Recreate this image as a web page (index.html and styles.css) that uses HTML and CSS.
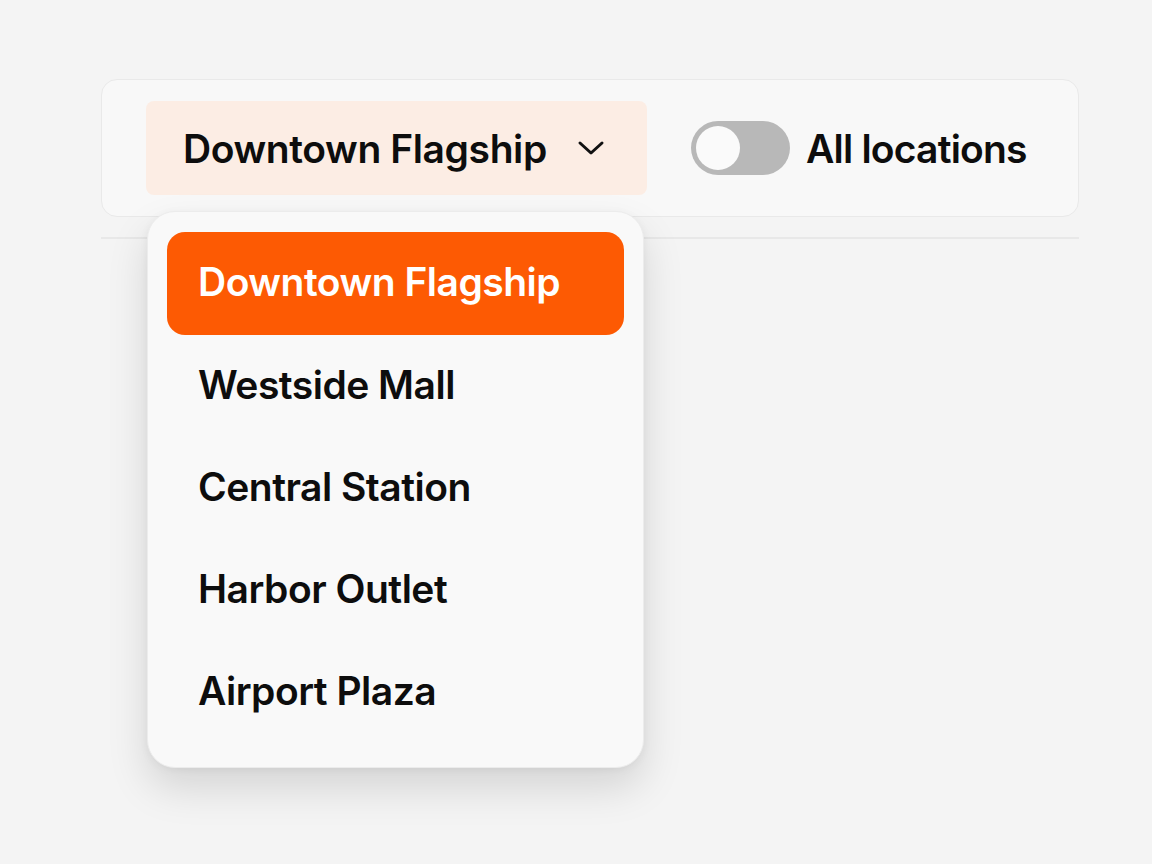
FILE: index.html
```html
<!DOCTYPE html>
<html lang="en">
<head>
    <meta charset="UTF-8">
    <meta name="viewport" content="width=device-width, initial-scale=1.0">
    <title>Location Picker</title>
    <link rel="stylesheet" href="styles.css">
</head>
<body>
    <div class="page">
        <div class="toolbar">
            <div class="picker">
                <button class="select">
                    <span>Downtown Flagship</span>
                    <svg class="chevron" width="28" height="16" viewBox="0 0 28 16">
                        <path d="M3 3 L14 13 L25 3" fill="none" stroke="#111" stroke-width="3" stroke-linecap="round" stroke-linejoin="round"/>
                    </svg>
                </button>
                <!-- Open menu -->
                <ul class="menu">
                    <li class="option active">Downtown Flagship</li>
                    <li class="option">Westside Mall</li>
                    <li class="option">Central Station</li>
                    <li class="option">Harbor Outlet</li>
                    <li class="option">Airport Plaza</li>
                </ul>
            </div>
            <label class="switch-row">
                <span class="switch"><span class="knob"></span></span>
                <span>All locations</span>
            </label>
        </div>
        <div class="divider"></div>
    </div>
</body>
</html>
```

FILE: styles.css
```css
* { margin: 0; padding: 0; box-sizing: border-box; }
body {
    font-family: Inter, "Noto Sans", sans-serif;
    background: #f4f4f4;
    color: #0d0d0d;
    min-height: 100vh;
}
.page {
    width: 978px;
    padding-top: 79px;
    margin-left: 101px;
}
.toolbar {
    display: flex;
    align-items: center;
    gap: 44px;
    padding: 21px 44px;
    background: #f8f8f8;
    border: 1px solid #e9e9e9;
    border-radius: 16px;
}
.picker { position: relative; }
.select {
    display: flex;
    align-items: center;
    gap: 30px;
    width: 501px;
    height: 94px;
    padding: 0 40px 0 37px;
    background: #fcede4;
    border: none;
    border-radius: 8px;
    font-family: inherit;
    font-size: 39px;
    font-weight: 600;
    letter-spacing: -0.4px;
    color: #0d0d0d;
    cursor: pointer;
}
.chevron { display: block; }
.switch-row {
    display: flex;
    align-items: center;
    gap: 16px;
    font-size: 39px;
    font-weight: 600;
    letter-spacing: -0.8px;
}
.switch {
    width: 99px;
    height: 54px;
    border-radius: 27px;
    background: #b8b8b8;
    padding: 5px;
    display: flex;
    align-items: center;
}
.knob {
    width: 44px;
    height: 44px;
    border-radius: 50%;
    background: #fafafa;
}
.divider {
    height: 2px;
    background: #e8e8e8;
    margin-top: 20px;
}
.menu {
    position: absolute;
    top: calc(100% + 16px);
    left: 1px;
    width: 497px;
    list-style: none;
    padding: 20px 19px 24px;
    background: #f9f9f9;
    border: 1px solid #ececec;
    border-radius: 28px;
    box-shadow: 0 20px 40px rgba(0,0,0,0.13), 0 2px 8px rgba(0,0,0,0.05);
}
.option {
    height: 102px;
    display: flex;
    align-items: center;
    padding-left: 31px;
    padding-bottom: 4px;
    font-size: 39px;
    font-weight: 600;
    letter-spacing: -0.5px;
    color: #0d0d0d;
    border-radius: 18px;
}
.option.active {
    background: #fd5a03;
    color: #fff;
    height: 103px;
}
```
